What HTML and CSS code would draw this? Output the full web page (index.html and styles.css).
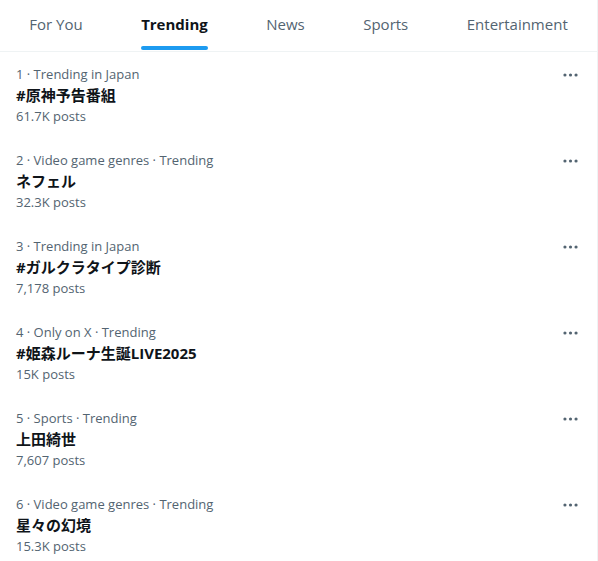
FILE: index.html
```html
<!DOCTYPE html>
<html lang="ja">
<head>
<meta charset="utf-8">
<title>Explore - Trending</title>
<link rel="stylesheet" href="styles.css">
</head>
<body>
<div class="column">
  <nav class="tabs">
    <div class="tab"><span class="tab-label">For You</span></div>
    <div class="tab active"><span class="tab-label">Trending<span class="indicator"></span></span></div>
    <div class="tab"><span class="tab-label">News</span></div>
    <div class="tab"><span class="tab-label">Sports</span></div>
    <div class="tab"><span class="tab-label">Entertainment</span></div>
  </nav>
  <section class="trends">
    <div class="trend">
      <div class="trend-body">
        <div class="meta">1 · Trending in Japan</div>
        <div class="title">#原神予告番組</div>
        <div class="count">61.7K posts</div>
      </div>
      <svg class="more" viewBox="0 0 24 24"><circle cx="5" cy="12" r="2"/><circle cx="12" cy="12" r="2"/><circle cx="19" cy="12" r="2"/></svg>
    </div>
    <div class="trend">
      <div class="trend-body">
        <div class="meta">2 · Video game genres · Trending</div>
        <div class="title">ネフェル</div>
        <div class="count">32.3K posts</div>
      </div>
      <svg class="more" viewBox="0 0 24 24"><circle cx="5" cy="12" r="2"/><circle cx="12" cy="12" r="2"/><circle cx="19" cy="12" r="2"/></svg>
    </div>
    <div class="trend">
      <div class="trend-body">
        <div class="meta">3 · Trending in Japan</div>
        <div class="title">#ガルクラタイプ診断</div>
        <div class="count">7,178 posts</div>
      </div>
      <svg class="more" viewBox="0 0 24 24"><circle cx="5" cy="12" r="2"/><circle cx="12" cy="12" r="2"/><circle cx="19" cy="12" r="2"/></svg>
    </div>
    <div class="trend">
      <div class="trend-body">
        <div class="meta">4 · Only on X · Trending</div>
        <div class="title">#姫森ルーナ生誕LIVE2025</div>
        <div class="count">15K posts</div>
      </div>
      <svg class="more" viewBox="0 0 24 24"><circle cx="5" cy="12" r="2"/><circle cx="12" cy="12" r="2"/><circle cx="19" cy="12" r="2"/></svg>
    </div>
    <div class="trend">
      <div class="trend-body">
        <div class="meta">5 · Sports · Trending</div>
        <div class="title">上田綺世</div>
        <div class="count">7,607 posts</div>
      </div>
      <svg class="more" viewBox="0 0 24 24"><circle cx="5" cy="12" r="2"/><circle cx="12" cy="12" r="2"/><circle cx="19" cy="12" r="2"/></svg>
    </div>
    <div class="trend">
      <div class="trend-body">
        <div class="meta">6 · Video game genres · Trending</div>
        <div class="title">星々の幻境</div>
        <div class="count">15.3K posts</div>
      </div>
      <svg class="more" viewBox="0 0 24 24"><circle cx="5" cy="12" r="2"/><circle cx="12" cy="12" r="2"/><circle cx="19" cy="12" r="2"/></svg>
    </div>
  </section>
</div>
</body>
</html>
```

FILE: styles.css
```css
html, body {
  margin: 0;
  padding: 0;
  background: #ffffff;
}

body {
  font-family: "Open Sans", "Noto Sans CJK JP", sans-serif;
  color: #0f1419;
  -webkit-font-smoothing: antialiased;
}

.column {
  width: 597px;
  height: 561px;
  border-right: 1px solid #eff3f4;
  overflow: hidden;
}

.tabs {
  display: flex;
  height: 51px;
  border-bottom: 1px solid #eff3f4;
}

.tab {
  flex: 1 1 auto;
  display: flex;
  justify-content: center;
  align-items: stretch;
  padding: 0 16px;
}

.tab-label {
  position: relative;
  display: flex;
  align-items: center;
  padding-bottom: 3px;
  font-size: 15px;
  font-weight: 500;
  color: #536471;
  white-space: nowrap;
}

.tab.active .tab-label {
  font-weight: 700;
  color: #0f1419;
}

.indicator {
  position: absolute;
  left: 0;
  right: 0;
  bottom: 1px;
  height: 4px;
  border-radius: 9999px;
  background: #1d9bf0;
}

.trend {
  display: flex;
  justify-content: space-between;
  align-items: flex-start;
  padding: 12px 16px;
  height: 62px;
}

.trend-body {
  display: flex;
  flex-direction: column;
}

.meta {
  font-size: 13px;
  line-height: 20px;
  color: #536471;
}

.title {
  font-size: 15px;
  line-height: 22px;
  font-weight: 700;
  color: #0f1419;
}

.count {
  margin-top: 1px;
  font-size: 13px;
  line-height: 19px;
  color: #536471;
}

.more {
  width: 19px;
  height: 20px;
  margin-top: 1px;
  margin-right: 1px;
  fill: #536471;
  flex: none;
}
```
